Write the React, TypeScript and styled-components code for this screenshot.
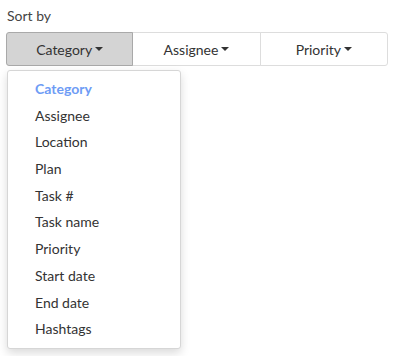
import styled, { createGlobalStyle } from "styled-components";

const GlobalStyle = createGlobalStyle`
  html, body, #root {
    height: 100%;
  }
  body {
    margin: 0;
    background: #fff;
    font-family: Lato, "Open Sans", sans-serif;
  }
`;

const Page = styled.div`
  min-height: 100%;
  box-sizing: border-box;
  padding: 6px 8px 0 6px;
  display: flex;
  flex-direction: column;
`;

const Label = styled.div`
  font-size: 14px;
  line-height: 20px;
  color: #444;
  padding-left: 1px;
  margin-bottom: 6px;
`;

const Group = styled.div`
  position: relative;
  display: grid;
  grid-template-columns: repeat(3, 1fr);
  width: 382px;
`;

const SortButton = styled.button<{ $active?: boolean }>`
  height: 34px;
  margin: 0;
  font-family: inherit;
  font-size: 14px;
  color: #333;
  background: ${(p) => (p.$active ? "#d4d4d4" : "#fff")};
  border: 1px solid ${(p) => (p.$active ? "#a9a9a9" : "#ddd")};
  margin-left: -1px;
  display: flex;
  align-items: center;
  justify-content: center;
  gap: 1px;
  cursor: pointer;

  &:first-child {
    margin-left: 0;
    border-radius: 3px 0 0 3px;
    z-index: 1;
  }
  &:nth-child(3) {
    border-radius: 0 3px 3px 0;
  }
`;

const Caret = styled.span`
  display: inline-block;
  width: 0;
  height: 0;
  margin-left: 2px;
  border-left: 4px solid transparent;
  border-right: 4px solid transparent;
  border-top: 4px solid #333;
`;

const Menu = styled.ul`
  position: absolute;
  top: 38px;
  left: 1px;
  width: 172px;
  margin: 0;
  padding: 5px 0;
  list-style: none;
  background: #fff;
  border: 1px solid #d6d6d6;
  border-radius: 3px;
  box-shadow: 0 4px 10px rgba(0, 0, 0, 0.15);
  z-index: 2;
`;

const Item = styled.li<{ $selected?: boolean }>`
  height: 26.7px;
  line-height: 26.7px;
  padding-left: 27px;
  font-size: 14px;
  color: ${(p) => (p.$selected ? "#6e9cf5" : "#333")};
  font-weight: ${(p) => (p.$selected ? 700 : 400)};
`;

const options = [
  "Category",
  "Assignee",
  "Location",
  "Plan",
  "Task #",
  "Task name",
  "Priority",
  "Start date",
  "End date",
  "Hashtags",
];

export default function App() {
  return (
    <>
      <GlobalStyle />
      <Page>
        <Label>Sort by</Label>
        <Group>
          <SortButton $active>
            Category<Caret />
          </SortButton>
          <SortButton>
            Assignee<Caret />
          </SortButton>
          <SortButton>
            Priority<Caret />
          </SortButton>
          <Menu>
            {options.map((o) => (
              <Item key={o} $selected={o === "Category"}>
                {o}
              </Item>
            ))}
          </Menu>
        </Group>
      </Page>
    </>
  );
}
